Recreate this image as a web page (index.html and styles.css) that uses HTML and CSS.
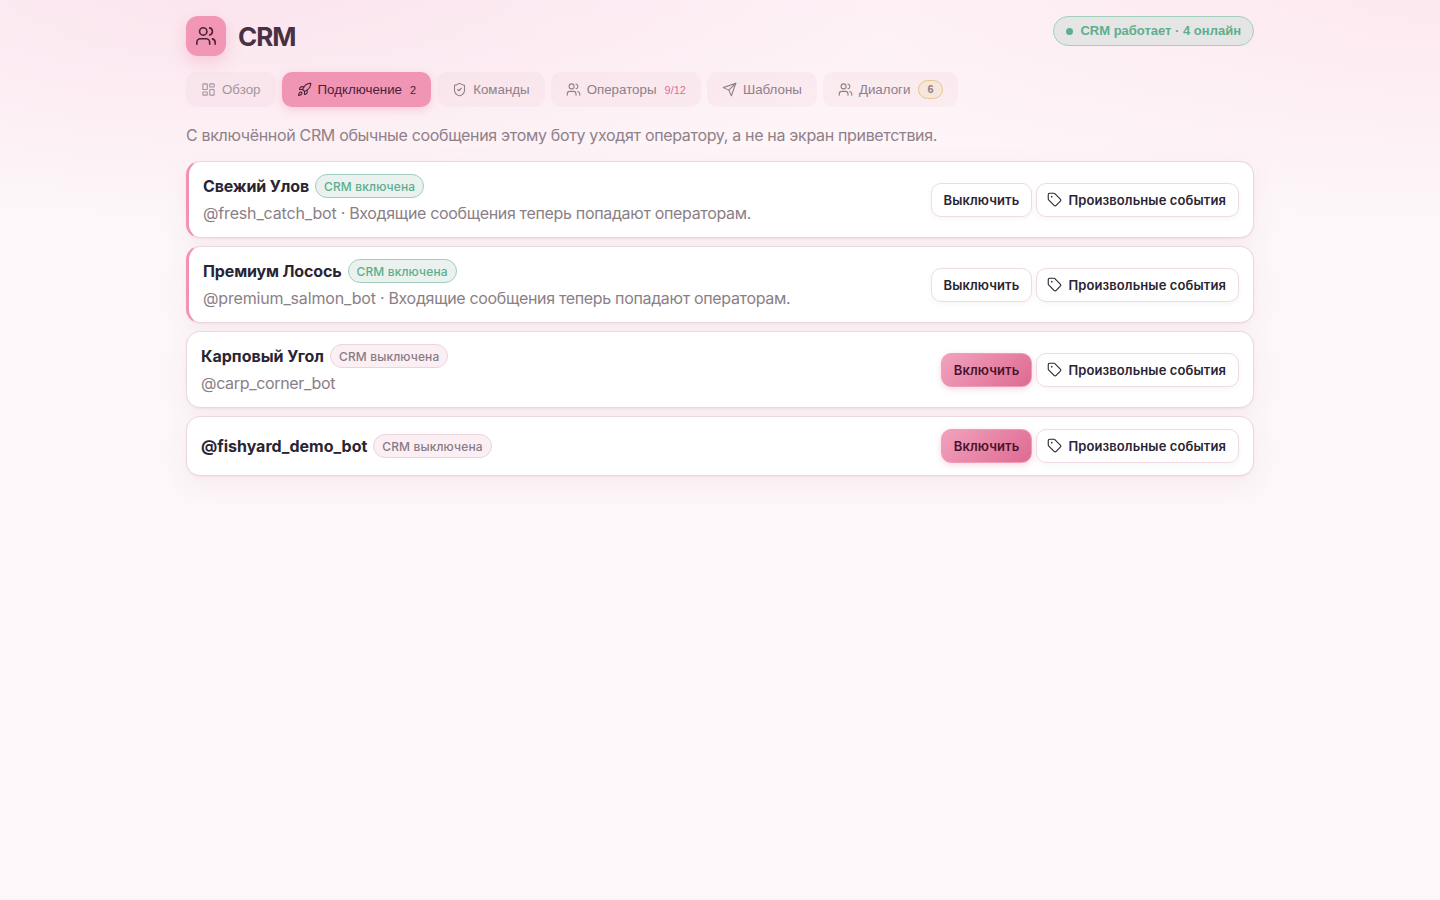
FILE: index.html
```html
<!DOCTYPE html>
<html lang="ru">
<head>
  <meta charset="UTF-8">
  <meta name="viewport" content="width=device-width, initial-scale=1.0">
  <title>CRM</title>
  <link rel="stylesheet" href="styles.css">
</head>
<body>
  <svg width="0" height="0" class="sprite">
    <symbol id="users" viewBox="0 0 24 24">
      <path d="M16 21v-2a4 4 0 0 0-4-4H6a4 4 0 0 0-4 4v2"/>
      <circle cx="9" cy="7" r="4"/>
      <path d="M22 21v-2a4 4 0 0 0-3-3.87"/>
      <path d="M16 3.13a4 4 0 0 1 0 7.75"/>
    </symbol>
    <symbol id="dashboard" viewBox="0 0 24 24">
      <rect width="7" height="9" x="3" y="3" rx="1"/>
      <rect width="7" height="5" x="14" y="3" rx="1"/>
      <rect width="7" height="9" x="14" y="12" rx="1"/>
      <rect width="7" height="5" x="3" y="16" rx="1"/>
    </symbol>
    <symbol id="rocket" viewBox="0 0 24 24">
      <path d="M4.5 16.5c-1.5 1.26-2 5-2 5s3.74-.5 5-2c.71-.84.7-2.13-.09-2.91a2.18 2.18 0 0 0-2.91-.09z"/>
      <path d="m12 15-3-3a22 22 0 0 1 2-3.95A12.88 12.88 0 0 1 22 2c0 2.72-.78 7.5-6 11a22.35 22.35 0 0 1-4 2z"/>
      <path d="M9 12H4s.55-3.03 2-4c1.62-1.08 5 0 5 0"/>
      <path d="M12 15v5s3.03-.55 4-2c1.08-1.62 0-5 0-5"/>
    </symbol>
    <symbol id="shield" viewBox="0 0 24 24">
      <path d="M20 13c0 5-3.5 7.5-7.66 8.95a1 1 0 0 1-.67-.01C7.5 20.5 4 18 4 13V6a1 1 0 0 1 1-1c2 0 4.5-1.2 6.24-2.72a1.17 1.17 0 0 1 1.52 0C14.51 3.81 17 5 19 5a1 1 0 0 1 1 1z"/>
      <path d="m9 12 2 2 4-4"/>
    </symbol>
    <symbol id="send" viewBox="0 0 24 24">
      <path d="m22 2-7 20-4-9-9-4Z"/>
      <path d="M22 2 11 13"/>
    </symbol>
    <symbol id="tag" viewBox="0 0 24 24">
      <path d="M12.586 2.586A2 2 0 0 0 11.172 2H4a2 2 0 0 0-2 2v7.172a2 2 0 0 0 .586 1.414l8.704 8.704a2.426 2.426 0 0 0 3.42 0l6.58-6.58a2.426 2.426 0 0 0 0-3.42z"/>
      <circle cx="7.5" cy="7.5" r=".5" fill="currentColor"/>
    </symbol>
  </svg>

  <main class="page">
    <header class="header">
      <div class="brand">
        <span class="brand-icon"><svg class="icon"><use href="#users"/></svg></span>
        <h1>CRM</h1>
      </div>
      <div class="status"><span class="status-dot"></span>CRM работает · 4 онлайн</div>
    </header>

    <nav class="tabs">
      <button class="tab tab-dim"><svg class="icon"><use href="#dashboard"/></svg>Обзор</button>
      <button class="tab active"><svg class="icon"><use href="#rocket"/></svg>Подключение <span class="tab-count">2</span></button>
      <button class="tab"><svg class="icon"><use href="#shield"/></svg>Команды</button>
      <button class="tab"><svg class="icon"><use href="#users"/></svg>Операторы <span class="tab-count">9/12</span></button>
      <button class="tab"><svg class="icon"><use href="#send"/></svg>Шаблоны</button>
      <button class="tab"><svg class="icon"><use href="#users"/></svg>Диалоги <span class="tab-badge">6</span></button>
    </nav>

    <p class="hint">С включённой CRM обычные сообщения этому боту уходят оператору, а не на экран приветствия.</p>

    <section class="bots">
      <article class="bot connected">
        <div class="bot-info">
          <div class="bot-title"><strong>Свежий Улов</strong><span class="pill pill-on">CRM включена</span></div>
          <div class="bot-meta"><span class="handle">@fresh_catch_bot</span> · Входящие сообщения теперь попадают операторам.</div>
        </div>
        <div class="bot-actions">
          <button class="btn">Выключить</button>
          <button class="btn btn-tag"><svg class="icon"><use href="#tag"/></svg>Произвольные события</button>
        </div>
      </article>
      <article class="bot connected">
        <div class="bot-info">
          <div class="bot-title"><strong>Премиум Лосось</strong><span class="pill pill-on">CRM включена</span></div>
          <div class="bot-meta"><span class="handle">@premium_salmon_bot</span> · Входящие сообщения теперь попадают операторам.</div>
        </div>
        <div class="bot-actions">
          <button class="btn">Выключить</button>
          <button class="btn btn-tag"><svg class="icon"><use href="#tag"/></svg>Произвольные события</button>
        </div>
      </article>
      <article class="bot">
        <div class="bot-info">
          <div class="bot-title"><strong>Карповый Угол</strong><span class="pill">CRM выключена</span></div>
          <div class="bot-meta">@carp_corner_bot</div>
        </div>
        <div class="bot-actions">
          <button class="btn btn-primary">Включить</button>
          <button class="btn btn-tag"><svg class="icon"><use href="#tag"/></svg>Произвольные события</button>
        </div>
      </article>
      <article class="bot">
        <div class="bot-info">
          <div class="bot-title"><strong>@fishyard_demo_bot</strong><span class="pill">CRM выключена</span></div>
        </div>
        <div class="bot-actions">
          <button class="btn btn-primary">Включить</button>
          <button class="btn btn-tag"><svg class="icon"><use href="#tag"/></svg>Произвольные события</button>
        </div>
      </article>
    </section>
  </main>
</body>
</html>
```
FILE: styles.css
```css
* {
  box-sizing: border-box;
}

body {
  margin: 0;
  min-height: 100vh;
  font-family: Inter, "Liberation Sans", sans-serif;
  font-size: 16px;
  line-height: 27px;
  letter-spacing: -0.0205em;
  color: #2a2433;
  background:
    radial-gradient(620px 220px at 18% 0, rgba(247, 205, 224, 0.32), transparent 100%),
    radial-gradient(560px 220px at 100% 0, rgba(250, 210, 223, 0.26), transparent 100%),
    linear-gradient(rgba(253, 234, 241, 0.5), transparent 210px),
    #fdf7f9;
}

.sprite {
  position: absolute;
}

.icon {
  width: 15px;
  height: 15px;
  flex: none;
  fill: none;
  stroke: currentColor;
  stroke-width: 1.75;
  stroke-linecap: round;
  stroke-linejoin: round;
}

.page {
  width: 1068px;
  margin: 0 auto;
  padding-top: 16px;
}

.header {
  display: flex;
  justify-content: space-between;
  align-items: flex-start;
  margin-bottom: 16px;
}

.brand {
  display: flex;
  align-items: center;
  gap: 12px;
}

.brand-icon {
  display: grid;
  place-items: center;
  width: 40px;
  height: 40px;
  border-radius: 12px;
  color: #4a2236;
  background: #f196b5;
  box-shadow: 0 6px 16px rgba(240, 140, 175, 0.35);
}

.brand-icon .icon {
  width: 22px;
  height: 22px;
}

h1 {
  margin: 2px 0 0;
  font-size: 26px;
  font-weight: 700;
  line-height: 30px;
  letter-spacing: -0.04em;
  color: #483142;
}

.status {
  display: flex;
  align-items: center;
  gap: 7px;
  height: 29.5px;
  padding: 0 12px 1px;
  border: 1px solid #a5cfbd;
  border-radius: 15px;
  font: bold 13px "Liberation Sans", sans-serif;
  letter-spacing: 0;
  color: #5fad8d;
  background: #e5e5e6;
}

.status-dot {
  width: 7px;
  height: 7px;
  margin-top: 2px;
  border-radius: 50%;
  background: #5fad8d;
}

.tabs {
  display: flex;
  gap: 6px;
  margin-bottom: 15px;
}

.tab {
  display: flex;
  align-items: center;
  gap: 6px;
  height: 35px;
  padding: 0 15px;
  border: 0;
  border-radius: 10px;
  font: 13.33px "Liberation Sans", sans-serif;
  color: #8f8089;
  background: rgba(238, 205, 217, 0.2);
}

.tab-dim {
  color: #a394a0;
}

.tab.active {
  color: #47213a;
  background: #f095b4;
  box-shadow: 0 3px 8px rgba(240, 130, 170, 0.3);
}

.tab-count {
  margin-left: 2px;
  font-size: 11px;
  color: #e56a97;
}

.active .tab-count {
  color: #47213a;
}

.tab-badge {
  padding: 2px 8px;
  margin-left: 2px;
  border: 1px solid #e8c793;
  border-radius: 10px;
  font-size: 11px;
  font-weight: bold;
  line-height: 13px;
  background: #f6e7dc;
}

.hint {
  margin: 0 0 12px;
  color: #8f8089;
}

.bots {
  display: grid;
  gap: 8px;
}

.bot {
  display: flex;
  justify-content: space-between;
  align-items: center;
  min-height: 60px;
  padding: 10.5px 14px;
  border: 1px solid #ecd6df;
  border-radius: 14px;
  background: #fff;
  box-shadow: 0 1px 2px rgba(120, 50, 85, 0.06), 0 8px 24px rgba(180, 90, 130, 0.08);
}

.bot.connected {
  border-left: 3px solid #f291b2;
}

.bot-title {
  display: flex;
  align-items: center;
  gap: 6px;
}

.bot-title strong {
  font-weight: 700;
  letter-spacing: -0.001em;
}

.connected .bot-title strong {
  letter-spacing: -0.009em;
}

.bot-meta {
  color: #8a8086;
}

.handle {
  letter-spacing: -0.01em;
}

.pill {
  height: 24px;
  padding: 0 8px;
  border: 1px solid #edd3dd;
  border-radius: 12px;
  font-size: 12px;
  font-weight: 500;
  line-height: 23px;
  letter-spacing: 0.01em;
  color: #8a7a84;
  background: #fbeff4;
}

.pill-on {
  border-color: #a3cdbb;
  color: #5fad8d;
  background: #e9f2ee;
}

.bot-actions {
  display: flex;
  gap: 4px;
}

.btn {
  display: flex;
  align-items: center;
  gap: 6px;
  height: 34px;
  padding: 0 12px;
  border: 1px solid #f0dae3;
  border-radius: 10px;
  font: 600 13px Inter, sans-serif;
  letter-spacing: 0.008em;
  color: #2a2433;
  background: #fff;
  box-shadow: 0 2px 6px rgba(60, 30, 50, 0.04);
}

.btn-tag {
  padding-left: 10px;
}

.btn-tag .icon {
  margin-bottom: 1px;
}

.btn-primary {
  border-color: #ef9cb9;
  color: #47152c;
  background: linear-gradient(135deg, #f2a2be, #de6a92);
  box-shadow: 0 2px 6px rgba(225, 100, 145, 0.25);
}
```
